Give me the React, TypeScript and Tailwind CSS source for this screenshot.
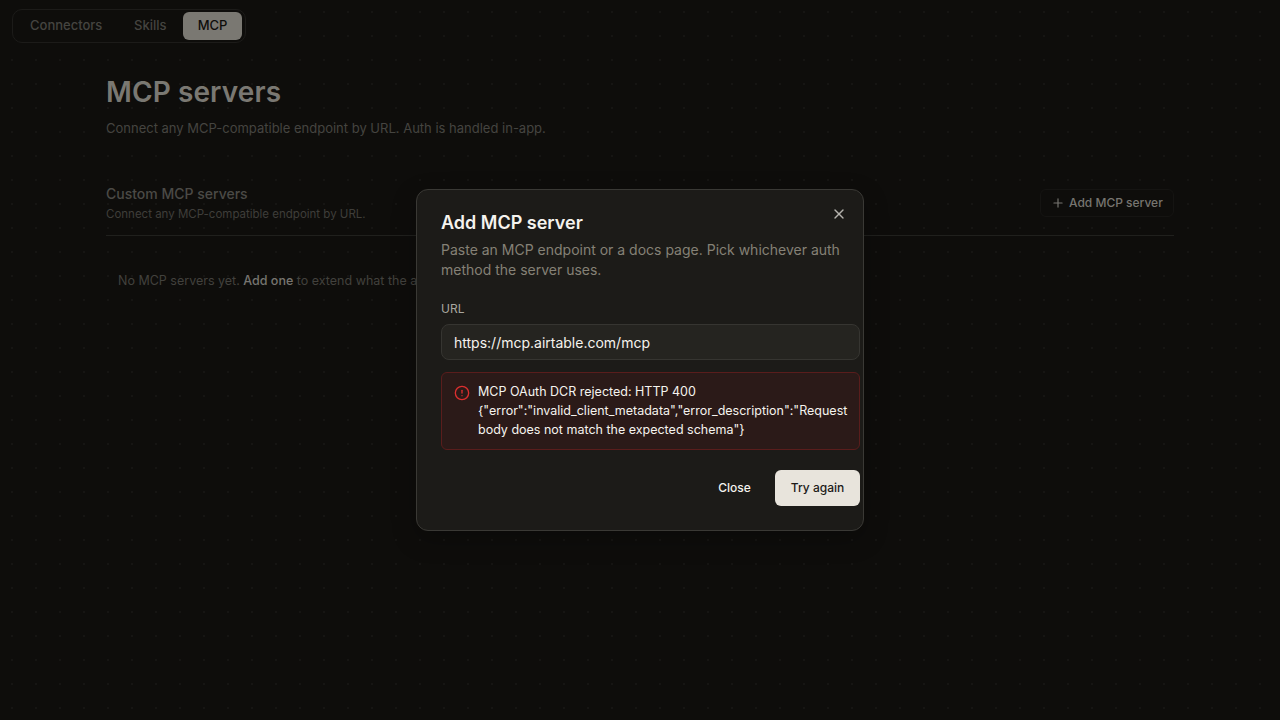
import { CircleAlert, Plus, X } from "lucide-react";

export default function App() {
  return (
    <div className="relative h-[720px] w-[1280px] overflow-hidden bg-[#0e0d0b] font-['Inter',sans-serif]">
      <div className="flex h-full flex-col bg-[radial-gradient(circle_at_center,#161513_1px,transparent_1.4px)] bg-[size:24px_24px]">
        <header className="flex h-[52px] w-[258px] shrink-0 items-start bg-[#0e0d0b] pl-3 pt-[9px]">
          <nav className="flex h-[34px] w-[234px] items-center rounded-[10px] border border-[#1c1b19] px-[2px] text-[13px] font-medium leading-5 text-[#454440]">
            <span className="w-[104px] pb-[2px] pl-[15px]">Connectors</span>
            <span className="w-16 pb-[2px] pl-[15px]">Skills</span>
            <span className="flex h-7 w-[59px] items-center justify-center rounded-md bg-[#7a7872] pb-[2px] text-[#0e0d0b]">MCP</span>
          </nav>
        </header>
        <main className="ml-[106px] w-[1068px] pt-[20px]">
          <h1 className="h-10 text-[28px] font-semibold leading-10 tracking-[0.1px] text-[#7a7872]">MCP servers</h1>
          <p className="mt-[6px] text-[13px] leading-5 text-[#454440]">Connect any MCP-compatible endpoint by URL. Auth is handled in-app.</p>
          <section className="mt-[46px]">
            <div className="flex h-[52px] items-start justify-between border-b border-[#20201d]">
              <div>
                <h2 className="text-[14px] font-medium leading-5 text-[#4b4a46]">Custom MCP servers</h2>
                <p className="mt-[2px] text-[11.5px] leading-4 text-[#3f3e3a]">Connect any MCP-compatible endpoint by URL.</p>
              </div>
              <button className="mt-[5px] flex h-7 w-[134px] items-center rounded-md border border-[#151412] bg-[#0e0d0b] pl-[10px] text-[12px] font-medium text-[#777570]">
                <Plus className="mr-1 size-3.5" strokeWidth={2} />
                Add MCP server
              </button>
            </div>
            <p className="ml-3 mt-[35px] text-[12.5px] leading-5 text-[#42413d]">
              No MCP servers yet. <span className="font-medium text-[#777570]">Add one</span> to extend what the agent can do.
            </p>
          </section>
        </main>
      </div>

      <div className="absolute inset-0 flex items-center justify-center">
        <div role="dialog" className="relative h-[342px] w-[448px] rounded-xl border border-[#3a3935] bg-[#1c1b18] pl-6 pt-[21px] shadow-[0_8px_24px_rgba(0,0,0,0.25)]">
          <button aria-label="Close dialog" className="absolute right-4 top-4 text-[#b5b3ad]">
            <X className="size-4" strokeWidth={2} />
          </button>
          <div className="w-[419px]">
            <h2 className="text-[18px] font-semibold leading-6 text-[#f5f3ee]">Add MCP server</h2>
            <p className="mt-[5px] w-[404px] text-[14px] leading-5 text-[#858176]">Paste an MCP endpoint or a docs page. Pick whichever auth method the server uses.</p>
            <label className="mt-[21px] block text-[12px] leading-4 text-[#a8a69f]">URL</label>
            <div className="mt-[7px] flex h-9 items-center rounded-lg border border-[#363531] bg-[#252420] px-3 text-[14px] text-[#f5f3ee]">https://mcp.airtable.com/mcp</div>
            <div className="mt-3 flex h-[78px] gap-2 rounded-md border border-[#5a1d1c] bg-[#2b1a18] px-3 pt-[9px] text-[12.5px] leading-[19px] text-[#f5f3ee]">
              <CircleAlert className="mt-[3px] size-4 shrink-0 text-[#dc2f2f]" strokeWidth={2} />
              <p className="whitespace-nowrap">
                MCP OAuth DCR rejected: HTTP 400
                <br />
                {'{"error":"invalid_client_metadata","error_description":"Request'}
                <br />
                {'body does not match the expected schema"}'}
              </p>
            </div>
            <div className="mt-5 flex justify-end gap-2 text-[12px] font-medium">
              <button className="h-9 w-[65px] text-[#f5f3ee]">Close</button>
              <button className="h-9 w-[85px] rounded-md bg-[#e8e4dc] text-[#1c1b18]">Try again</button>
            </div>
          </div>
        </div>
      </div>
    </div>
  );
}
